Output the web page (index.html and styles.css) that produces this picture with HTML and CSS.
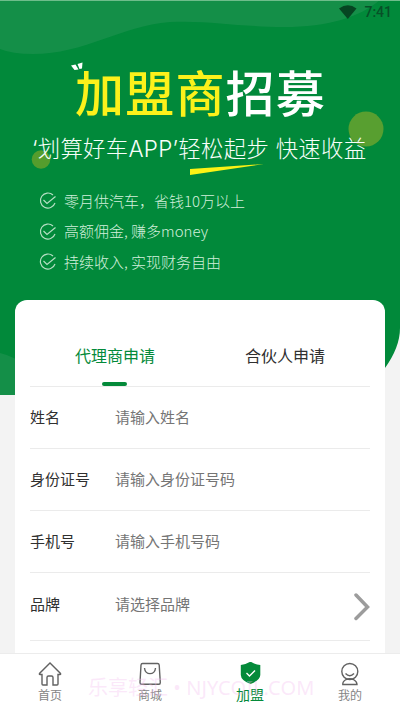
FILE: index.html
```html
<!DOCTYPE html>
<html lang="zh-CN">
<head>
<meta charset="utf-8">
<meta name="viewport" content="width=device-width, initial-scale=1">
<title>加盟</title>
<link rel="stylesheet" href="styles.css">
</head>
<body>
<div class="app">
  <svg class="backdrop" viewBox="0 0 400 395" aria-hidden="true">
    <path d="M0 0H400V328Q400 347 385 368Q367 395 330 395H0Z" fill="#01893a"/>
    <path d="M0 0H380C360 17 328 27 284 27C240 27 210 20 170 22C120 26 85 54 33 54Q12 54 0 49Z" fill="#148f48"/>
    <path d="M0 353Q30 360 50 395H0Z" fill="#148f48"/>
    <path d="M0 .5H400" stroke="#6fbd8b"/>
    <circle cx="366" cy="129" r="17.500" fill="#589f30"/>
    <circle cx="41" cy="159.500" r="9.300" fill="#559d2d"/>
    <path d="M190 169L264 164L190 175Z" fill="#fcf215"/>
    <path d="M71 65.500L75.500 64.500L78.500 69.500L74.500 70ZM77.500 64L82.500 62.500L82 68.500L79.500 69Z" fill="#fff"/>
  </svg>
  <header class="status">
    <svg width="18" height="14" viewBox="0 0 18 14"><path d="M0 3.500Q9-3 17.500 3.500L8.800 14Z" fill="#064522"/></svg>
    <span>7:41</span>
  </header>
  <section class="hero">
    <h1><span>加盟商</span>招募</h1>
    <p class="slogan">‘划算好车APP’轻松起步 快速收益</p>
    <ul>
      <li><svg class="tick" viewBox="0 0 18 18"><path d="M14 3A7.500 7.500 0 1 0 16 11M4.500 8L8 11.500L16.500 4.500"/></svg><span>零月供汽车，省钱10万以上</span></li>
      <li><svg class="tick" viewBox="0 0 18 18"><path d="M14 3A7.500 7.500 0 1 0 16 11M4.500 8L8 11.500L16.500 4.500"/></svg><span>高额佣金, 赚多money</span></li>
      <li><svg class="tick" viewBox="0 0 18 18"><path d="M14 3A7.500 7.500 0 1 0 16 11M4.500 8L8 11.500L16.500 4.500"/></svg><span>持续收入, 实现财务自由</span></li>
    </ul>
  </section>
  <main class="card">
    <div class="tabs"><div class="tab active">代理商申请</div><div class="tab">合伙人申请</div></div>
    <div class="row"><label>姓名</label><span>请输入姓名</span></div>
    <div class="row"><label>身份证号</label><span>请输入身份证号码</span></div>
    <div class="row"><label>手机号</label><span>请输入手机号码</span></div>
    <div class="row brand"><label>品牌</label><span>请选择品牌</span><svg class="arrow" width="16" height="28" viewBox="0 0 16 28"><path d="M2 2L13.500 14L2 25.500"/></svg></div>
  </main>
  <nav class="nav">
    <div class="item"><svg width="24" height="24" viewBox="0 0 24 24"><path d="M12 1L1.500 11.500Q1 12.500 2 12.500H4V22Q4 23 5 23H9V15.500Q9 14 10.500 14H13.500Q15 14 15 15.500V23H19Q20 23 20 22V12.500H22Q23 12.500 22.500 11.500Z"/></svg><span>首页</span></div>
    <div class="item"><svg width="24" height="24" viewBox="0 0 24 24"><path d="M4.500 1.500H19.500Q21 1.500 21.200 3L22.300 20.500Q22.300 22.300 21 22.300H3.500Q2 22.300 2 20.500L3 3Q3.200 1.500 4.500 1.500ZM6.500 6C7 13.500 17 13.500 17.500 6"/></svg><span>商城</span></div>
    <div class="item on"><svg width="24" height="24" viewBox="0 0 24 24"><path class="shield" d="M12.500-.5Q17 2.500 22.300 3V13Q22 18.500 12.500 22Q3 18.500 2.800 13V3Q8 2.500 12.500-.5Z"/><path class="mark" d="M8.500 11L11.500 14L17 8.500"/></svg><span>加盟</span></div>
    <div class="item"><svg width="24" height="24" viewBox="0 0 24 24"><circle cx="11.800" cy="9.500" r="8"/><path d="M7.500 11.500Q11.800 16 16 11.500M8 17.500Q4.500 19.500 4.800 22.500H19Q19 19.500 15.500 17.500Q11.800 16 8 17.500"/></svg><span>我的</span></div>
  </nav>
  <div class="watermark">乐享轻汇<span> • NJYCOIL.COM</span></div>
</div>
</body>
</html>
```
FILE: styles.css
```css
* { box-sizing: border-box; }
body { margin: 0; background: #f3f3f3; font-family: "Noto Sans CJK SC", sans-serif; }
.app { position: relative; width: 400px; height: 710px; overflow: hidden; display: flex; flex-direction: column; }
.backdrop { position: absolute; left: 0; top: 0; width: 400px; height: 395px; }
.status { position: relative; height: 24px; flex: none; display: flex; justify-content: flex-end; align-items: center; gap: 7px; padding-right: 8px; color: #075028; font: 500 14px/24px Roboto, sans-serif; }
.hero { position: relative; height: 276px; flex: none; padding: 31px 0 0 32px; color: #fff; }
h1 { margin: 0 0 0 43px; font-size: 49px; letter-spacing: 1.2px; line-height: 72px; font-weight: 500; white-space: nowrap; }
h1 span { color: #fcf11b; }
.slogan { margin: 5px 0 0; font-family: Inter, "Noto Sans CJK SC", sans-serif; font-size: 22.4px; letter-spacing: .3px; line-height: 34px; font-weight: 300; color: #f8fffa; white-space: nowrap; }
ul { list-style: none; margin: 20px 0 0 7px; padding: 0; }
li { height: 30.500px; display: flex; align-items: center; gap: 7px; font-size: 15px; font-weight: 300; color: #d2efdc; white-space: nowrap; }
li span { margin-top: -2px; }
.tick { width: 18px; height: 18px; fill: none; stroke: #b5dfc3; stroke-width: 1.200; }
.card { position: relative; height: 353px; flex: none; margin: 0 15px; padding: 25px 15px 0; background: #fff; border-radius: 12px 12px 0 0; }
.tabs { display: flex; height: 62px; border-bottom: 1px solid #ebebeb; }
.tab { position: relative; flex: 1; text-align: center; font-size: 16px; line-height: 60px; color: #303030; }
.active { color: #048a3a; }
.active::after { content: ""; position: absolute; left: 72px; bottom: 0; width: 25px; height: 4px; border-radius: 2px; background: #048a3a; }
.row { display: flex; align-items: center; height: 62px; padding-bottom: 2px; border-bottom: 1px solid #ebebeb; font-size: 15px; color: #757575; }
.row label { width: 85px; color: #303030; }
.row.brand { height: 68px; padding-bottom: 7px; }
.arrow { margin: 7px 0 0 auto; fill: none; stroke: #9c9c9c; stroke-width: 3.500; stroke-linecap: round; }
.nav { position: relative; height: 57px; flex: none; display: flex; background: #fff; border-top: 1px solid #ececec; }
.item { flex: 1; display: flex; flex-direction: column; align-items: center; padding-top: 8px; font-size: 12px; line-height: 18px; color: #858585; }
.item svg { fill: none; stroke: #626262; stroke-width: 1.400; flex: none; }
.item.on { color: #048a3a; font-size: 14px; line-height: 16px; }
.item .shield { fill: #048a3a; stroke: none; }
.item .mark { stroke: #fff; }
.watermark { position: absolute; left: 88px; top: 674px; font-family: "Noto Sans", "Noto Sans CJK SC", sans-serif; font-size: 20px; line-height: 28px; color: rgba(244, 190, 240, .35); white-space: nowrap; }
.watermark span { letter-spacing: .1px; }
```
